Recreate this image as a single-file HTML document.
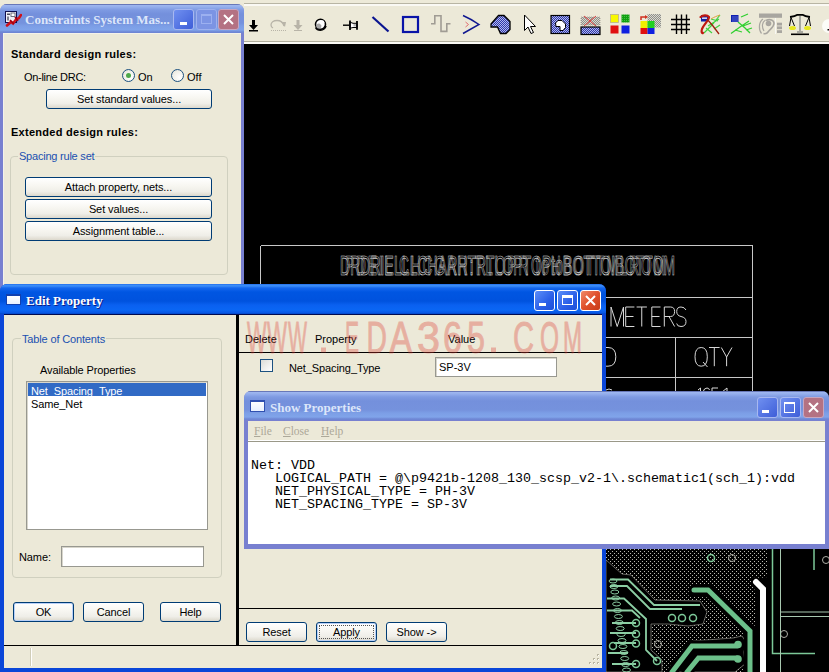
<!DOCTYPE html>
<html><head><meta charset="utf-8">
<style>
*{box-sizing:border-box;margin:0;padding:0}
html,body{width:829px;height:672px;overflow:hidden;background:#ECE9D8;font-family:"Liberation Sans",sans-serif;font-size:11px;color:#000}
.a{position:absolute}
.t{position:absolute;white-space:nowrap;line-height:1}
.btn{position:absolute;border:1px solid #003C74;border-radius:3px;background:linear-gradient(#FFFFFF 0%,#F8F7F2 40%,#EFEEE8 75%,#DCD8CC 100%);text-align:center;font-size:11px;line-height:19px;white-space:nowrap;letter-spacing:-0.1px}
.gb{position:absolute;border:1px solid #D0D0BF;border-radius:4px}
.gbl{position:absolute;color:#2050B0;background:#ECE9D8;padding:0 1px;white-space:nowrap;line-height:1}
.cap-i{background:linear-gradient(#6878B8 0px,#6878B8 1px,#A0B8F0 1px,#94AEEC 3px,#7E9AE2 6px,#7490DC 10px,#7592DD 19px,#7C9EE6 22px,#80A4EA 26px,#6E86D4 28px,#6E86D4 29px)}
.cap-a{background:linear-gradient(#1A64E8 0px,#3A8CF8 1px,#3A8CF8 2px,#1466EE 4px,#0056E2 8px,#0052DE 17px,#0A60F0 21px,#0A66F4 26px,#0856E4 29px,#0044C0 30px)}
.ttl{position:absolute;font-family:"Liberation Serif",serif;font-weight:bold;font-size:13px;white-space:nowrap;line-height:1}
.tb{position:absolute;width:21px;height:21px;border-radius:3px}
.radio{position:absolute;width:13px;height:13px;border-radius:50%;border:1px solid #1C5180;background:radial-gradient(circle at 70% 70%,#FFFFFF 0%,#F0EFE8 60%,#D8D6CC 100%)}
</style></head><body>

<!-- toolbar strip -->
<div class="a" style="left:0;top:0;width:829px;height:4px;background:#EDEAD9"></div>
<div class="a" style="left:244px;top:3px;width:585px;height:1px;background:#B8B5A4"></div>
<div class="a" style="left:244px;top:4px;width:585px;height:2px;background:#FAF9F4"></div>
<div class="a" style="left:244px;top:41px;width:585px;height:1px;background:#B0AD9C"></div>
<div class="a" style="left:244px;top:42px;width:585px;height:2px;background:#FAF9F4"></div>


<!-- toolbar icons -->
<svg class="a" style="left:0;top:0" width="829" height="44">
<defs>
<pattern id="hb" width="2" height="2" patternUnits="userSpaceOnUse"><rect width="2" height="2" fill="#3038A8"/><rect width="1" height="1" fill="#B0B8F0"/><rect x="1" y="1" width="1" height="1" fill="#B0B8F0"/></pattern>
<pattern id="hg" width="2" height="2" patternUnits="userSpaceOnUse"><rect width="2" height="2" fill="#909088"/><rect width="1" height="1" fill="#D8D8D0"/><rect x="1" y="1" width="1" height="1" fill="#D8D8D0"/></pattern>
<pattern id="hgr" width="2" height="2" patternUnits="userSpaceOnUse"><rect width="2" height="2" fill="#10A010"/><rect width="1" height="1" fill="#40C040"/></pattern>
</defs>
<!-- 1 download black -->
<path d="M252 20h3v5h3l-4.5 5l-4.5-5h3z" fill="#000"/><rect x="249" y="30" width="9" height="1.5" fill="#000"/>
<!-- 2 redo gray -->
<path d="M284 26c-1-4-4-5.5-7-5.5c-3.5 0-6 2-6 4.5c0 1.5 1 2.5 2 3" stroke="#B8B4A8" stroke-width="1.3" fill="none"/><path d="M281 22l5 0l-1 5z" fill="#B8B4A8"/><path d="M271 30.5h15" stroke="#B8B4A8" stroke-width="1" stroke-dasharray="1 1"/>
<!-- 3 download gray -->
<path d="M296.5 20h3v5h3l-4.5 5l-4.5-5h3z" fill="#B8B4A8"/><rect x="294" y="30" width="8" height="1" fill="#B8B4A8"/>
<!-- 4 blob -->
<circle cx="320.5" cy="24.3" r="5" fill="#fff" stroke="#000" stroke-width="1.6"/><circle cx="318.8" cy="26" r="2.6" fill="#A8A8A8"/><circle cx="322" cy="22.6" r="2.4" fill="#fff"/><path d="M315.5 27.5c1 2 3 2.8 5 2.8c2.5 0 5-2 5.5-4.5" stroke="#000" stroke-width="1.5" fill="none"/>
<!-- 5 pin -->
<path d="M343 25.2h6.5" stroke="#000" stroke-width="1.4"/><path d="M350 22.2L353 23.3H357V27.5H353L350 28.2Z" fill="#fff" stroke="#000" stroke-width="1"/><rect x="353.5" y="24" width="2.5" height="2.5" fill="#B8B8B8"/><path d="M350 20.5V30M357 21V29.8" stroke="#000" stroke-width="1.8"/>
<!-- 6 line -->
<path d="M372.5 17l16 14.5" stroke="#0A1490" stroke-width="2.2"/>
<!-- 7 square -->
<rect x="403" y="17" width="15" height="15" fill="none" stroke="#0A14A8" stroke-width="2.2"/>
<!-- 8 square wave -->
<path d="M431 23.8H434.8V15.8H441V31.4H446.8V23.8H450.5" stroke="#A09C94" stroke-width="1.6" fill="none"/>
<!-- 9 chevron -->
<path d="M463 15.5Q471 19 479 24.5Q471 29 463 33.5" stroke="#101890" stroke-width="1.5" fill="none"/><path d="M465.5 22l3 2.5l-3 2.5" stroke="#E07070" stroke-width="1" fill="none"/>
<!-- 10 polygon -->
<path d="M491 24L498.5 15.5H504L510 21.5V29.5L506 33.5H500.5L497.5 27H491Z" fill="url(#hb)" stroke="#000" stroke-width="1.3"/>
<!-- 11 cursor -->
<path d="M524.5 15v15.5l3.5-3.5l3 6.5l2.5-1l-3-6h5z" fill="#fff" stroke="#000" stroke-width="1"/>
<!-- 12 square hatched -->
<rect x="551" y="15.5" width="18.5" height="18" fill="url(#hb)" stroke="#000" stroke-width="1.2"/><path d="M555.5 23L558 20.5H562L565.5 24V27.5L563 30.5H560V26.5H556Z" fill="#fff" stroke="#000" stroke-width="1"/>
<!-- 13 bars -->
<rect x="581" y="17" width="19" height="8" fill="url(#hg)" stroke="#A09890" stroke-dasharray="1 1" stroke-width="0.8"/><path d="M584 16l12 10M596 16l-12 10" stroke="#E04040" stroke-width="1"/>
<rect x="581" y="27" width="19" height="7.5" fill="url(#hb)" stroke="#000" stroke-width="1.2"/>
<!-- 14 color squares -->
<rect x="610.5" y="14.5" width="8" height="8" fill="#F8F800" stroke="#B8B090" stroke-width="0.8"/><rect x="621.5" y="14.5" width="8" height="8" fill="url(#hgr)"/><rect x="610.5" y="25.5" width="8" height="8" fill="#E01010"/><rect x="621.5" y="25.5" width="8" height="8" fill="#1020E0"/>
<!-- 15 color squares + arrow -->
<rect x="647.5" y="14" width="13.5" height="13.5" fill="url(#hg)"/>
<rect x="640.5" y="21" width="7" height="7" fill="#F0F000"/><rect x="647.5" y="21" width="7" height="7" fill="#20D020"/><rect x="640.5" y="28" width="7" height="6" fill="#E01010"/><rect x="647.5" y="28" width="7" height="6" fill="#1020E0"/>
<path d="M641 20v-3h5" stroke="#D03020" stroke-width="1.5" fill="none"/><path d="M645 15l3 2l-3 2z" fill="#D03020"/>
<!-- 16 grid -->
<path d="M676.5 14.5v19.5M681.5 14.5v19.5M686.5 14.5v19.5M671 19.5h19M671 24.5h19M671 29.5h19" stroke="#000" stroke-width="1.4"/>
<!-- 17 ratsnest red -->
<path d="M704 33L712 25L720 15M708 26L719 19M714 29L720 25M711 19L718 21M706 28L712 33" stroke="#40D040" stroke-width="1.2" fill="none"/>
<rect x="701" y="15" width="7" height="6.5" fill="#1020A8"/><rect x="702" y="17.5" width="5" height="1.3" fill="#fff"/>
<path d="M700.5 17C703 15 707 14.5 709 17C710 19 704 24 702 29C701 32 702 33.5 703 33" stroke="#C01810" stroke-width="2.2" fill="none" stroke-linecap="round"/>
<path d="M707 19L713 26L719 34" stroke="#A02010" stroke-width="1.3" fill="none"/>
<path d="M711 19C714 17 717 16 720 15" stroke="#E0A040" stroke-width="1" fill="none"/>
<!-- 18 ratsnest green -->
<path d="M731 33.5L740 27L749 21M738 22L745 28L750 33M741 17L748 14M743 26L751 23M746 30L752 28M735 30L742 32" stroke="#30D030" stroke-width="1.3" fill="none"/>
<rect x="731" y="15" width="7.5" height="7" fill="#1020B0"/><g fill="#A0B0F0"><rect x="732.5" y="16.5" width="1" height="1"/><rect x="734.5" y="16.5" width="1" height="1"/><rect x="736.5" y="16.5" width="1" height="1"/><rect x="732.5" y="18.5" width="1" height="1"/><rect x="734.5" y="18.5" width="1" height="1"/><rect x="736.5" y="18.5" width="1" height="1"/><rect x="732.5" y="20.5" width="1" height="1"/><rect x="734.5" y="20.5" width="1" height="1"/><rect x="736.5" y="20.5" width="1" height="1"/></g>
<!-- 19 gray icon -->
<rect x="759" y="13.5" width="23" height="4.3" fill="#A8A6A0"/>
<path d="M761.5 33.5C758.5 30 758.5 22 763 19" stroke="#A8A6A0" stroke-width="1.2" fill="none"/>
<path d="M764 31C761.5 27 762 22 765.5 20" stroke="#A8A6A0" stroke-width="1.2" fill="none"/>
<path d="M766 20.5C770 18.5 774 20 774 23.5C774 27 770 29 768 32C767 33.5 765 34 763.5 33.5" stroke="#A8A6A0" stroke-width="1.6" fill="none"/>
<circle cx="768.5" cy="23.5" r="2.8" fill="#A8A6A0"/>
<path d="M775.5 18V34" stroke="#F8F8F4" stroke-width="1"/>
<rect x="777" y="22.7" width="5" height="2.8" fill="#A8A6A0"/><rect x="777" y="26.4" width="5" height="2.8" fill="#A8A6A0"/><rect x="777" y="30.2" width="5" height="2.8" fill="#A8A6A0"/>
<!-- 20 balance -->
<path d="M790 17Q795 16.5 797.5 14.8H802.5Q805 16.5 810 17" stroke="#000" stroke-width="1.8" fill="none"/>
<path d="M800 16V31M797 32H803" stroke="#A8A8A0" stroke-width="2"/>
<path d="M791 17.5L789.5 26M791 17.5L794.5 26M809 17.5L805.5 26M809 17.5L810.5 26" stroke="#000" stroke-width="1"/>
<ellipse cx="792.5" cy="28" rx="3.5" ry="2" fill="#E8E820"/><ellipse cx="807.5" cy="28" rx="3.5" ry="2" fill="#E8E820"/>
<rect x="791" y="33.5" width="18" height="1.6" fill="#000"/>
<!-- 21 partial -->
<circle cx="829" cy="26" r="7" fill="#FCFCF8"/><rect x="827.5" y="29" width="1.5" height="1.5" fill="#000"/>
</svg>

<!-- black canvas -->
<div class="a" id="canvas" style="left:244px;top:44px;width:585px;height:628px;background:#000;overflow:hidden">
<svg width="585" height="628" viewBox="244 44 585 628" style="position:absolute;left:0;top:0">
<defs>
<pattern id="dots" x="0" y="1" width="4" height="4" patternUnits="userSpaceOnUse"><rect x="2" y="0" width="1" height="1" fill="#B8B8B0"/><rect x="0" y="2" width="1" height="1" fill="#B8B8B0"/></pattern>
</defs>
<!-- drill chart table -->
<g stroke="#C8C8C8" stroke-width="1" fill="none" shape-rendering="crispEdges">
<path d="M260.5 245.5H752.5V400M260.5 245.5V300"/>
<path d="M260 297.5H752M260 337.5H752M260 377.5H752M675.5 337.5V400"/>
</g>
<g font-family="Liberation Sans" fill="none" stroke="#D8D8D8" stroke-width="0.55">
<text transform="translate(340 275) scale(0.5 1)" x="0" y="0" font-size="27.6" textLength="670" lengthAdjust="spacing" stroke="#E0E0E0" stroke-width="0.65">DRDRIELLLCHARHTRTLOPTOPtoBOTTOIBOTTOM</text>
<text transform="translate(345 275) scale(0.5 1)" x="0" y="0" font-size="27.6" textLength="640" lengthAdjust="spacing" stroke="#D0D0D0" stroke-width="0.6">PDEIL CHCGAR:TLOPR toHBOTTMLROM</text>
</g>
<g stroke="#D8D8D8" stroke-width="1" fill="none">
<path d="M611 326.5V307L617.2 326.5L623.5 307V326.5"/>
<path d="M634.4 307H625.7V326.5H634.4M625.7 316.5H633.5"/>
<path d="M636.6 307H646.9M641.75 307V326.5"/>
<path d="M660.5 307H651.8V326.5H660.5M651.8 316.5H659.5"/>
<path d="M664.3 326.5V307H670.5Q674.6 307 674.6 311.5Q674.6 316.5 670.5 316.5H664.3M669 316.5L674.6 326.5"/>
<path d="M686 310Q684.5 307 681 307Q676.7 307 676.7 311.5Q676.7 315.5 681 316.5Q686 317.5 686 321.5Q686 326.5 681 326.5Q677 326.5 676.7 323.5"/>
<path d="M604 347.5H608Q615.8 347.5 615.8 356.8Q615.8 366.2 608 366.2H604"/>
<path d="M701.2 347.5Q695 347.5 695 356.8Q695 366.2 701.2 366.2Q707.3 366.2 707.3 356.8Q707.3 347.5 701.2 347.5M703 362L707.5 367"/>
<path d="M709 347.5H719.6M714.3 347.5V366.2"/>
<path d="M721.3 347.5L726.6 357L732 347.5M726.6 357V366.2"/>
<path d="M606 390Q609 388 612 390M698 390L700.5 388V392M703 392Q704 388 707 388Q709 388 709.5 390M712 388H718M712 388V392M722 392L727 388V392"/>
</g>
<!-- PCB pour -->
<path d="M606 549H768V577L758 578L753 584L755 592V672H606Z" fill="url(#dots)"/>
<!-- clearance: left trace channel -->
<path d="M606 560L622 574L631 575L655 600L700 601L707 612L703 624L688 626L668 624L651 624L651 650L662 660L662 672H606Z" fill="#000" stroke="#A8A8A0" stroke-width="0.6"/>
<!-- clearance bottom right thick traces -->
<path d="M668 672L693 641L733 638L742 636L746 642L744 652L745 664L735 672Z" fill="#000" stroke="#A8A8A0" stroke-width="0.6"/>
<path d="M688 596L708 584L756 627L756 672H744L744 633L705 596Z" fill="#000"/>
<g stroke="#8CCFA4" stroke-width="1" fill="none"><ellipse cx="613.0" cy="581" rx="4" ry="2"/><ellipse cx="613.9" cy="586.5" rx="4" ry="2"/><ellipse cx="614.8" cy="592" rx="4" ry="2"/><ellipse cx="615.7" cy="598" rx="4" ry="2"/><ellipse cx="616.6" cy="604" rx="4" ry="2"/><ellipse cx="617.5" cy="610.5" rx="4" ry="2"/><ellipse cx="618.4" cy="616.5" rx="4" ry="2"/><ellipse cx="619.3" cy="622.5" rx="4" ry="2"/><ellipse cx="620.2" cy="628.5" rx="4" ry="2"/><ellipse cx="621.1" cy="634.5" rx="4" ry="2"/><ellipse cx="622.0" cy="640.5" rx="4" ry="2"/><ellipse cx="622.9" cy="646.5" rx="4" ry="2"/><ellipse cx="623.8" cy="652.5" rx="4" ry="2"/><ellipse cx="624.7" cy="658.5" rx="4" ry="2"/><ellipse cx="625.6" cy="664.5" rx="4" ry="2"/><ellipse cx="626.5" cy="670" rx="4" ry="2"/></g>
<!-- traces -->
<g stroke="#8CCFA4" stroke-width="1.8" fill="none">
<path d="M610 579.5H628L654 605H700"/>
<path d="M610 586H627L650 609H682"/>
<path d="M607 598.5H624L646 619V650L657 661"/>
<path d="M607 610.5H632L640 618"/>
<path d="M612 623H636M610 633H636M614 643H636M608 653H628M612 664H636"/>
</g>
<g stroke="#7CC898" stroke-width="1.5" fill="none">
<circle cx="672" cy="618" r="3.5"/><circle cx="682" cy="618" r="3.5"/><circle cx="693" cy="618" r="3.5"/>
<circle cx="636" cy="623" r="3.5"/><circle cx="636" cy="634" r="3.5"/><circle cx="636" cy="643.5" r="3.5"/>
<circle cx="613" cy="646" r="3.5"/><circle cx="657" cy="661" r="3.5"/><circle cx="636" cy="664" r="3.5"/>
<circle cx="711" cy="558" r="3.5"/>
</g>
<g stroke="#B0B0A8" stroke-width="1" fill="none">
<circle cx="732" cy="558" r="3.5"/><circle cx="658" cy="644" r="3.5"/><circle cx="784" cy="634" r="3.5"/><circle cx="826" cy="560" r="3.5"/>

</g>
<!-- clearances -->
<g stroke="#000" stroke-width="11" fill="none" stroke-linecap="round">
<path d="M694 590H708L750 631V672"/>
<path d="M672 672L692 646H737"/>
<path d="M687 672L698.5 658H737"/>
</g>
<g stroke="#000" stroke-width="10" fill="none" stroke-linecap="round"><path d="M756 582L763 589V672"/></g>
<!-- thick traces -->
<g stroke="#6CC08A" stroke-width="5" fill="none" stroke-linecap="round">
<path d="M694 590H708L750 631V672"/>
<path d="M672 672L692 646H737"/>
<path d="M687 672L698.5 658H737"/>
</g>
<circle cx="738" cy="644.5" r="3.8" fill="#6CC08A"/><circle cx="738" cy="659" r="3.8" fill="#6CC08A"/>
<!-- white trace -->
<path d="M756 582L763 589V672" stroke="#FFFFFF" stroke-width="6" fill="none" stroke-linecap="round"/>
<!-- right lines -->
<g stroke="#7CC898" stroke-width="1.5" fill="none">
<path d="M772.5 549V653.5H815"/>
<path d="M814 549V570"/>
</g>
<g stroke="#A8C8B0" stroke-width="1" fill="none">
<path d="M780.5 549V672M781 612H829M781 616.5H829"/>
</g>
</svg>
</div>

<!-- ============ Constraints System Manager window ============ -->
<div class="a" style="left:0;top:4px;width:244px;height:290px;background:#7880D0;border-radius:7px 7px 0 0;overflow:hidden">
  <div class="a cap-i" style="left:0;top:0;width:244px;height:29px"></div>
  <div class="a" style="left:3px;top:29px;width:238px;height:270px;background:#ECE9D8;border-left:1px solid #F4F2EA;border-top:1px solid #F4F2EA"></div>
</div>
<div class="ttl" style="left:25px;top:13px;color:#DCE6FA">Constraints System Mas...</div>
<div class="tb" style="left:173px;top:9px;background:linear-gradient(135deg,#7090F0,#3E5ED8);border:1px solid #A8B8F0"></div>
<div class="a" style="left:180px;top:22px;width:7px;height:3px;background:#fff"></div>
<div class="tb" style="left:196px;top:9px;background:#7C94E4;border:1px solid #9EB1EE"></div>
<div class="a" style="left:201px;top:14px;width:11px;height:10px;border:1px solid #9CB0F0;border-top-width:2px"></div>
<div class="tb" style="left:218px;top:9px;background:#B47283;border:1px solid #C7A6C0"></div>
<svg class="a" style="left:218px;top:9px" width="21" height="21"><path d="M6 6L15 15M15 6L6 15" stroke="#fff" stroke-width="2"/></svg>
<!-- icon -->
<svg class="a" style="left:5px;top:11px" width="17" height="16"><rect x="0.5" y="0.5" width="11" height="11" fill="#F0F0F8" stroke="#101050"/><rect x="2" y="2.5" width="3" height="1.5" fill="#505060"/><rect x="6" y="2" width="4" height="3.5" fill="#fff" stroke="#505060" stroke-width="0.8"/><rect x="2" y="5.5" width="2" height="4" fill="#808090"/><path d="M2 14.5L6 11L8 12.5L11 8.5L14 7L16 4" stroke="#D01018" stroke-width="2.6" fill="none" stroke-linecap="round"/><path d="M5 9L9 13M10 6L13 10" stroke="#A00010" stroke-width="1.5"/></svg>

<div class="t" style="left:11px;top:49px;font-weight:bold;letter-spacing:0.28px">Standard design rules:</div>
<div class="t" style="left:24px;top:72px;letter-spacing:-0.3px">On-line DRC:</div>
<div class="radio" style="left:122px;top:69px"></div>
<div class="a" style="left:126px;top:73px;width:5px;height:5px;border-radius:50%;background:#4DA84A"></div>
<div class="t" style="left:138px;top:72px">On</div>
<div class="radio" style="left:171px;top:69px"></div>
<div class="t" style="left:187px;top:72px">Off</div>
<div class="btn" style="left:46px;top:89px;width:166px;height:20px">Set standard values...</div>
<div class="t" style="left:11px;top:127px;font-weight:bold;letter-spacing:0.28px">Extended design rules:</div>
<div class="gb" style="left:10px;top:156px;width:218px;height:119px"></div>
<div class="gbl" style="left:18px;top:151px;letter-spacing:-0.22px">Spacing rule set</div>
<div class="btn" style="left:25px;top:177px;width:187px;height:20px">Attach property, nets...</div>
<div class="btn" style="left:25px;top:199px;width:187px;height:20px">Set values...</div>
<div class="btn" style="left:25px;top:221px;width:187px;height:20px">Assignment table...</div>

<!-- ============ Edit Property window ============ -->
<div class="a" style="left:0;top:284px;width:606px;height:388px;background:#0A46D8;border-radius:7px 7px 0 0;overflow:hidden">
  <div class="a cap-a" style="left:0;top:0;width:606px;height:30px"></div>
  <div class="a" style="left:4px;top:30px;width:598px;height:1px;background:#000A50"></div>
  <div class="a" style="left:4px;top:31px;width:598px;height:353px;background:#ECE9D8"></div>
</div>


<div class="ttl" style="left:26px;top:294px;color:#fff;text-shadow:1px 1px 0 #0A1E8A">Edit Property</div>
<div class="a" style="left:6px;top:294px;width:15px;height:11px;background:linear-gradient(#FFFFFF,#E8F0FF);border:1px solid #1040B0;border-top-width:2px"></div>
<div class="tb" style="left:534px;top:290px;background:linear-gradient(135deg,#5C8EF8,#2A5EE8 60%,#1E50D8);border:1px solid #fff"></div>
<div class="a" style="left:539px;top:303px;width:7px;height:3px;background:#fff"></div>
<div class="tb" style="left:557px;top:290px;background:linear-gradient(135deg,#5C8EF8,#2A5EE8 60%,#1E50D8);border:1px solid #fff"></div>
<div class="a" style="left:562px;top:295px;width:11px;height:10px;border:1px solid #fff;border-top-width:3px"></div>
<div class="tb" style="left:580px;top:290px;background:linear-gradient(135deg,#F08A6A,#E0502C 50%,#C83C18);border:1px solid #fff"></div>
<svg class="a" style="left:580px;top:290px" width="21" height="21"><path d="M6 6L15 15M15 6L6 15" stroke="#fff" stroke-width="2"/></svg>

<!-- left pane -->
<div class="gb" style="left:12px;top:338px;width:210px;height:240px"></div>
<div class="gbl" style="left:21px;top:334px;letter-spacing:-0.15px">Table of Contents</div>
<div class="t" style="left:40px;top:365px;letter-spacing:-0.1px">Available Properties</div>
<div class="a" style="left:26px;top:381px;width:182px;height:149px;background:#fff;border:1px solid #989890;box-shadow:inset 1px 1px 0 #D8D6CC"></div>
<div class="a" style="left:28px;top:383px;width:178px;height:13px;background:#316AC5"></div>
<div class="t" style="left:31px;top:386px;color:#fff;letter-spacing:-0.1px">Net_Spacing_Type</div>
<div class="t" style="left:31px;top:399px;letter-spacing:-0.1px">Same_Net</div>
<div class="t" style="left:19px;top:552px;letter-spacing:-0.1px">Name:</div>
<div class="a" style="left:61px;top:546px;width:143px;height:21px;background:#fff;border:1px solid #989890;box-shadow:inset 1px 1px 0 #D8D6CC"></div>
<div class="btn" style="left:13px;top:602px;width:61px;height:20px;box-shadow:inset 0 0 0 1px #B8D0F8">OK</div>
<div class="btn" style="left:83px;top:602px;width:61px;height:20px">Cancel</div>
<div class="btn" style="left:160px;top:602px;width:61px;height:20px">Help</div>

<!-- splitter / right pane -->
<div class="a" style="left:236px;top:315px;width:3px;height:331px;background:#000"></div>
<div class="a" style="left:238px;top:352px;width:364px;height:1px;background:#000"></div>
<div class="a" style="left:238px;top:608px;width:364px;height:1px;background:#000"></div>
<div class="a" style="left:4px;top:645px;width:598px;height:1px;background:#000"></div>
<div class="t" style="left:245px;top:334px">Delete</div>
<div class="t" style="left:315px;top:334px">Property</div>
<div class="t" style="left:448px;top:334px">Value</div>
<div class="a" style="left:260px;top:359px;width:13px;height:13px;border:1px solid #1C5180;background:linear-gradient(135deg,#DCDCD7,#FFFFFF)"></div>
<div class="t" style="left:289px;top:363px;letter-spacing:-0.1px">Net_Spacing_Type</div>
<div class="a" style="left:435px;top:357px;width:122px;height:20px;background:#fff;border:1px solid #989890;box-shadow:inset 1px 1px 0 #D8D6CC"></div>
<div class="t" style="left:439px;top:362px">SP-3V</div>
<div class="btn" style="left:246px;top:622px;width:61px;height:20px">Reset</div>
<div class="btn" style="left:316px;top:622px;width:61px;height:20px;box-shadow:inset 0 0 0 1px #B8D0F8">Apply</div>
<div class="a" style="left:319px;top:625px;width:55px;height:14px;border:1px dotted #555"></div>
<div class="btn" style="left:386px;top:622px;width:61px;height:20px">Show -&gt;</div>
<div class="a" style="left:30px;top:648px;width:1px;height:18px;background:#D0CDB8"></div>
<div class="a" style="left:31px;top:648px;width:1px;height:18px;background:#fff"></div>

<svg class="a" style="left:588px;top:653px" width="14" height="14"><g fill="#B8B4A0"><rect x="9" y="1" width="2" height="2"/><rect x="5" y="5" width="2" height="2"/><rect x="9" y="5" width="2" height="2"/><rect x="1" y="9" width="2" height="2"/><rect x="5" y="9" width="2" height="2"/><rect x="9" y="9" width="2" height="2"/></g><g fill="#fff"><rect x="10" y="2" width="1" height="1"/><rect x="6" y="6" width="1" height="1"/><rect x="10" y="6" width="1" height="1"/><rect x="2" y="10" width="1" height="1"/><rect x="6" y="10" width="1" height="1"/><rect x="10" y="10" width="1" height="1"/></g></svg>
<!-- watermark -->
<svg class="a" style="left:0;top:0;opacity:0.33" width="829" height="672"><g font-family="Liberation Sans" font-size="45" fill="#DC3C32" stroke="#DC3C32" stroke-width="1"><text x="247" y="352.5" textLength="19.6" lengthAdjust="spacingAndGlyphs">W</text><text x="267" y="352.5" textLength="20.0" lengthAdjust="spacingAndGlyphs">W</text><text x="288" y="352.5" textLength="19.0" lengthAdjust="spacingAndGlyphs">W</text><rect x="321.5" y="348" width="4" height="4" /><text x="345" y="352.5" textLength="14.0" lengthAdjust="spacingAndGlyphs">E</text><text x="366.6" y="352.5" textLength="20.4" lengthAdjust="spacingAndGlyphs">D</text><text x="389.4" y="352.5" textLength="22.6" lengthAdjust="spacingAndGlyphs">A</text><text x="417" y="352.5" textLength="23.0" lengthAdjust="spacingAndGlyphs">3</text><text x="443" y="352.5" textLength="19.0" lengthAdjust="spacingAndGlyphs">6</text><text x="467" y="352.5" textLength="18.0" lengthAdjust="spacingAndGlyphs">5</text><rect x="491.5" y="348" width="4" height="4" /><text x="513" y="352.5" textLength="21.0" lengthAdjust="spacingAndGlyphs">C</text><text x="540" y="352.5" textLength="19.0" lengthAdjust="spacingAndGlyphs">O</text><text x="563" y="352.5" textLength="19.0" lengthAdjust="spacingAndGlyphs">M</text></g></svg>
<!-- ============ Show Properties window ============ -->
<div class="a" style="left:244px;top:391px;width:585px;height:158px;background:#7880D0;border-radius:7px 7px 0 0;overflow:hidden">
  <div class="a cap-i" style="left:0;top:0;width:585px;height:29px"></div>
  <div class="a" style="left:4px;top:30px;width:577px;height:20px;background:#ECE9D8"></div>
  <div class="a" style="left:4px;top:49px;width:577px;height:1px;background:#FFFFFF"></div>
  <div class="a" style="left:4px;top:50px;width:577px;height:1px;background:#9A9888"></div>
  <div class="a" style="left:4px;top:51px;width:577px;height:102px;background:#fff"></div>
</div>


<div class="ttl" style="left:270px;top:401px;color:#DCE6FA">Show Properties</div>
<div class="a" style="left:250px;top:400px;width:15px;height:12px;background:linear-gradient(#FFFFFF,#E8F0FF);border:1px solid #3050B0;border-top-width:2px"></div>
<div class="tb" style="left:757px;top:397px;background:linear-gradient(135deg,#7090F0,#3E5ED8);border:1px solid #A8B8F0"></div>
<div class="a" style="left:762px;top:410px;width:7px;height:3px;background:#fff"></div>
<div class="tb" style="left:780px;top:397px;background:linear-gradient(135deg,#7090F0,#3E5ED8);border:1px solid #A8B8F0"></div>
<div class="a" style="left:784px;top:402px;width:11px;height:11px;border:1px solid #fff;border-top-width:2px"></div>
<div class="tb" style="left:803px;top:397px;background:#B47283;border:1px solid #C7A6C0"></div>
<svg class="a" style="left:803px;top:397px" width="21" height="21"><path d="M6 6L15 15M15 6L6 15" stroke="#fff" stroke-width="2"/></svg>
<div class="t" style="left:254px;top:426px;font-family:'Liberation Serif',serif;font-size:11.5px;color:#ACA899"><u>F</u>ile</div>
<div class="t" style="left:283px;top:426px;font-family:'Liberation Serif',serif;font-size:11.5px;color:#ACA899"><u>C</u>lose</div>
<div class="t" style="left:321px;top:426px;font-family:'Liberation Serif',serif;font-size:11.5px;color:#ACA899"><u>H</u>elp</div>
<pre class="a" style="left:251px;top:459px;font-family:'Liberation Mono',monospace;font-size:13.33px;line-height:13px;color:#000">Net: VDD
   LOGICAL_PATH = @\p9421b-1208_130_scsp_v2-1\.schematic1(sch_1):vdd
   NET_PHYSICAL_TYPE = PH-3V
   NET_SPACING_TYPE = SP-3V</pre>

</body></html>
